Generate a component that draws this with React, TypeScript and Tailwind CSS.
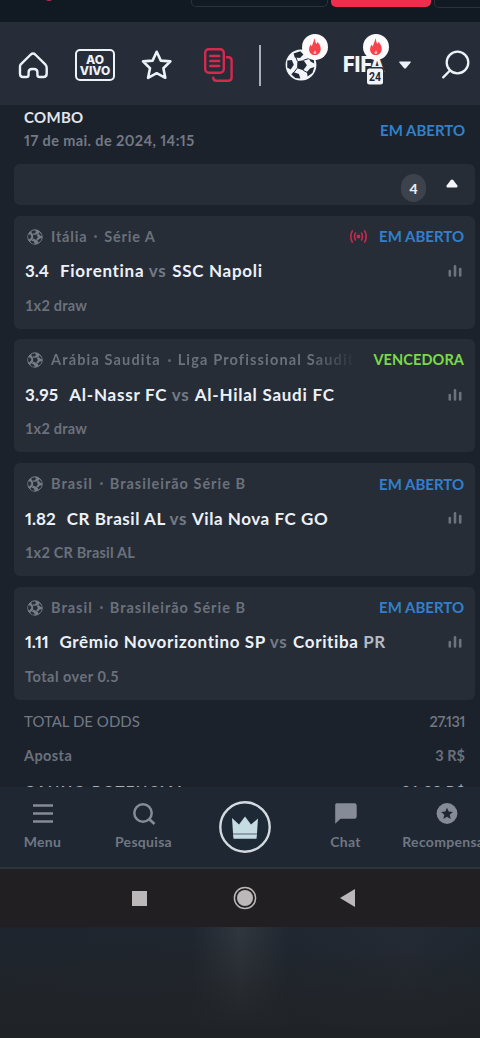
import React from 'react';

interface Bet {
  country: string;
  league: string;
  leagueClass: string;
  odd: string;
  oddClass?: string;
  home: React.ReactNode;
  away: React.ReactNode;
  matchClass: string;
  market: string;
  marketClass: string;
  won?: boolean;
  live?: boolean;
  fade?: boolean;
}

const bets: Bet[] = [
  {
    country: 'Itália',
    league: 'Série A',
    leagueClass: 'tracking-[0.8px]',
    odd: '3.4',
    home: 'Fiorentina',
    away: 'SSC Napoli',
    matchClass: 'tracking-[0.7px]',
    market: '1x2 draw',
    marketClass: 'tracking-[0.2px]',
    live: true,
  },
  {
    country: 'Arábia Saudita',
    league: 'Liga Profissional Saudita',
    leagueClass: 'tracking-[1.15px]',
    odd: '3.95',
    oddClass: 'tracking-[0.2px]',
    home: 'Al-Nassr FC',
    away: 'Al-Hilal Saudi FC',
    matchClass: 'tracking-[0.75px]',
    market: '1x2 draw',
    marketClass: 'tracking-[0.2px]',
    won: true,
    fade: true,
  },
  {
    country: 'Brasil',
    league: 'Brasileirão Série B',
    leagueClass: 'tracking-[1px]',
    odd: '1.82',
    home: 'CR Brasil AL',
    away: 'Vila Nova FC GO',
    matchClass: 'tracking-[0.55px]',
    market: '1x2 CR Brasil AL',
    marketClass: 'tracking-[0.2px]',
  },
  {
    country: 'Brasil',
    league: 'Brasileirão Série B',
    leagueClass: 'tracking-[1px]',
    odd: '1.11',
    oddClass: 'tracking-[-0.2px]',
    home: 'Grêmio Novorizontino SP',
    away: (
      <>
        Coritiba <span className="text-[#b5bac3]">PR</span>
      </>
    ),
    matchClass: 'tracking-[0.62px]',
    market: 'Total over 0.5',
    marketClass: 'tracking-[0.5px]',
  },
];

const SoccerBall: React.FC<{ className?: string; light: string; dark: string }> = ({ className, light, dark }) => (
  <svg viewBox="0 0 32 32" className={className}>
    <circle cx="16" cy="16" r="14.4" fill={light} stroke={light} strokeWidth="2" />
    <g fill={dark}>
      <path d="M12.4 12.2 18.6 11.2 21.9 16.2 18.2 21.3 12.1 19.2Z" />
      <path d="M8.6 4.4 15.3 2.3 18.4 5.4 15 9 9.8 8.4Z" />
      <path d="M24.2 6 28.8 11 29.2 14.4 25.6 12.6 23.8 9.4Z" />
      <path d="M2.3 11.6 6.8 11 8.8 15.7 5.7 20.4 2.2 18.6Z" />
      <path d="M25 19.4 29.4 18 27.4 24 22.6 27.4 21.9 23Z" />
      <path d="M8.2 23 13.9 25 15.4 29.5 10.3 28.9 6.4 25.6Z" />
    </g>
    <g stroke={dark} strokeWidth="1" fill="none">
      <path d="M12.4 12.2 10.8 8M18.6 11.2 23.8 9.6M12.1 19.2 9 23.4M18.2 21.3 22.3 23.5" />
    </g>
  </svg>
);

const FlameBadge: React.FC<{ className: string }> = ({ className }) => (
  <svg viewBox="0 0 26 26" className={`absolute size-[26px] ${className}`}>
    <circle cx="13" cy="13" r="13" fill="#fdfbfc" />
    <path
      d="M12.3 4.3C13.7 7 13 8.5 14.4 10c.7-.6.9-1.3.8-2.3 2.5 2.4 3.8 5 3.5 8-.3 3-2.6 5.4-5.8 5.4-3.4 0-5.7-2.3-5.8-5.3-.1-2.1.7-3.8 1.7-5.2.2.9.5 1.5 1.1 1.9.5-2.7 2-4.6 2.4-8.2Z"
      fill="#f8434c"
    />
    <path d="M13 16.2c1 1.1 1.4 1.7 1.2 2.6-.1.9-.6 1.3-1.4 1.3s-1.3-.5-1.3-1.3c0-.9.8-1.4 1.5-2.6Z" fill="#ffb4b2" />
  </svg>
);

const TopHeader: React.FC = () => (
  <header className="flex h-[86px] items-center text-[#edf1f8]">
    <svg viewBox="0 0 30 28" className="ml-[18px] h-7 w-[30px]" fill="none" stroke="currentColor" strokeWidth="2.4" strokeLinejoin="round">
      <path d="M2.5 13.7 12.8 3.5Q15 1.6 17.2 3.5L27.5 13.7Q28.7 15 28.7 17V22.5Q28.7 26 25.4 26H21.5Q19.4 26 19.4 23.7V21.3Q19.4 18 16 18H14Q10.6 18 10.6 21.3V23.7Q10.6 26 8.5 26H5Q2 26 2 22.5V16Q2 14.5 2.5 13.7Z" />
    </svg>
    <div className="ml-[27px] flex h-8 w-10 flex-col items-center justify-center rounded-[5px] border-[2.5px] border-current font-[Inter] text-[12px] leading-[11px] font-extrabold">
      <span>AO</span>
      <span>VIVO</span>
    </div>
    <svg viewBox="0 0 32 32" className="ml-[26px] size-8" fill="none" stroke="currentColor" strokeWidth="2.6" strokeLinejoin="round">
      <path d="M15.7 2.8 19.8 11.6 29.4 12.4 22.4 19.3 24.3 28.8 15.7 24.2 7.1 28.8 9 19.3 2 12.4 11.6 11.6Z" />
    </svg>
    <svg viewBox="0 0 30 36" className="ml-[30px] h-9 w-[30px] text-[#d5294f]" fill="none" stroke="currentColor" strokeWidth="2.4" strokeLinecap="round">
      <rect x="2.2" y="2.2" width="18.6" height="23.6" rx="3.5" />
      <path d="M7.2 9h9M7.2 14h9M7.2 19h9M24 10.2h1.3Q28.6 10.2 28.6 13.5V30.6Q28.6 33.8 25.3 33.8H13.5Q10.2 33.8 10.2 30.6" />
    </svg>
    <span className="ml-[26px] h-[41px] w-[2px] bg-[#a9aeb8]" />
    <div className="relative ml-[24px] h-8 w-11">
      <SoccerBall className="size-8" light="#f1f4f8" dark="#222936" />
      <FlameBadge className="-top-[15px] left-[17px]" />
    </div>
    <div className="relative ml-[14px] h-8 w-12">
      <svg viewBox="0 0 48 40" className="h-10 w-12" fontFamily="Roboto, sans-serif">
        <text x="0" y="23" fontSize="22" fontWeight="900" fill="#f1f4f8" textLength="41" lengthAdjust="spacingAndGlyphs">
          FIFA
        </text>
        <rect x="23" y="18" width="18" height="18.5" rx="3" fill="#262d38" />
        <rect x="24" y="19.5" width="16" height="16" rx="2.5" fill="#f1f4f8" />
        <text x="26" y="32.4" fontSize="13.5" fontWeight="700" fill="#222936" textLength="12" lengthAdjust="spacingAndGlyphs">
          24
        </text>
      </svg>
      <FlameBadge className="-top-[15px] left-[20px]" />
    </div>
    <svg viewBox="0 0 14 10" className="ml-[7px] h-[10px] w-[14px]" fill="currentColor">
      <path d="M1.6 1.6h10.8q.8.3.3 1L8.1 8q-1.1 1-2.2 0L1.3 2.6q-.5-.7.3-1Z" />
    </svg>
    <svg viewBox="0 0 30 30" className="ml-[29px] size-[30px]" fill="none" stroke="currentColor" strokeWidth="2.3" strokeLinecap="round">
      <circle cx="16.5" cy="12.5" r="10.8" />
      <path d="M9 20.5 2.2 27.4" />
    </svg>
  </header>
);

const BetCard: React.FC<{ bet: Bet }> = ({ bet }) => (
  <div className="h-[113px] rounded-[6px] bg-[#262d37] pr-[11px] pl-[11px]">
    <div className="flex h-[42px] items-center text-[14.5px] font-bold text-[#6b717c]">
      <SoccerBall className="ml-[2px] size-4 shrink-0" light="#777d87" dark="#262d37" />
      <div
        className={`ml-2 flex min-w-0 flex-1 items-center overflow-hidden whitespace-nowrap ${bet.leagueClass} ${
          bet.fade ? '[mask-image:linear-gradient(to_right,#000_84%,transparent_99%)]' : ''
        }`}
      >
        <span>{bet.country}</span>
        <span className="mx-[7px] size-[3px] shrink-0 rounded-full bg-[#5d6470]" />
        <span>{bet.league}</span>
      </div>
      {bet.live && (
        <svg viewBox="0 0 20 16" className="mr-[11px] h-[15px] w-[19px] text-[#c8294e]" fill="none" stroke="currentColor" strokeWidth="1.7" strokeLinecap="round">
          <circle cx="10" cy="8" r="1.2" fill="currentColor" />
          <path d="M6.7 4.3Q4.8 8 6.7 11.7M13.3 4.3Q15.2 8 13.3 11.7M3.4 2Q.2 8 3.4 14M16.6 2Q19.8 8 16.6 14" />
        </svg>
      )}
      {bet.won ? (
        <span className="ml-[13px] tracking-[0.1px] text-[#79dc45]">VENCEDORA</span>
      ) : (
        <span className="text-[15px] text-[#3180cb]">EM ABERTO</span>
      )}
    </div>
    <div className="flex h-[27px] items-center text-[17px] font-bold text-[#edf1f7]">
      <span className={`mr-[11px] proportional-nums ${bet.oddClass ?? ''}`}>{bet.odd}</span>
      <span className={`flex-1 whitespace-nowrap ${bet.matchClass}`}>
        {bet.home} <span className="mr-px text-[#757b86]">vs</span> {bet.away}
      </span>
      <svg viewBox="0 0 14 14" className="mr-[2px] size-[14px]" stroke="#6d737e" strokeWidth="2.6" strokeLinecap="round">
        <path d="M1.8 7V11.5M7 2.2V11.5M12.2 5V11.5" />
      </svg>
    </div>
    <div className={`flex h-[42px] items-center text-[14.5px] font-bold text-[#6b717c] ${bet.marketClass}`}>{bet.market}</div>
  </div>
);

const NavItem: React.FC<{ label: string; children: React.ReactNode }> = ({ label, children }) => (
  <div className="flex w-[101px] shrink-0 flex-col items-center pt-[15px]">
    <svg viewBox="0 0 24 24" className="size-6 text-[#858b97]">
      {children}
    </svg>
    <span className="mt-[7px] text-[14px] leading-[18px] font-bold tracking-[0.3px] text-[#707783]">{label}</span>
  </div>
);

export default function App() {
  return (
    <div className="flex h-[1038px] w-[480px] flex-col overflow-hidden bg-[#1b222c] font-[Lato,'Open_Sans',sans-serif]">
      {/* Page header scrolled almost out of view */}
      <div className="flex h-[22px] shrink-0 items-start overflow-hidden bg-[#111922]">
        <span className="-mt-[9px] ml-[44px] size-[10px] shrink-0 rounded-full bg-[#bd2951]" />
        <span className="ml-[137px] h-[7px] w-[137px] shrink-0 rounded-b-[5px] border border-t-0 border-[#2a323c]" />
        <span className="ml-[3px] h-[7px] w-[100px] shrink-0 rounded-b-[5px] bg-[#f12d4d]" />
        <span className="ml-[3px] h-[8px] w-[60px] shrink-0 rounded-bl-[5px] border border-t-0 border-[#2a323c]" />
      </div>

      <div className="h-[83px] shrink-0 bg-[#262d38]">
        <TopHeader />
      </div>

      <main className="h-[682px] shrink-0 overflow-hidden pr-[5px] pl-[14px]">
        <div className="flex h-[59px] items-center justify-between pr-[10px] pl-[10px]">
          <div className="-mt-[11px]">
            <p className="text-[15px] leading-6 font-bold tracking-[0.3px] text-[#e1e6ed]">COMBO</p>
            <p className="text-[14.5px] leading-6 font-bold tracking-[0.4px] text-[#737984] proportional-nums">17 de mai. de 2024, 14:15</p>
          </div>
          <span className="-mt-[9px] text-[15px] font-bold text-[#3180cb]">EM ABERTO</span>
        </div>

        <div className="flex h-[41px] items-center justify-end rounded-[6px] bg-[#262d37]">
          <span className="mt-[7px] flex h-[28px] w-[25px] items-center justify-center rounded-full bg-[#3c434d] text-[14px] font-black text-[#e6e9ee]">4</span>
          <svg viewBox="0 0 12 9" className="mt-[-2px] mr-[17px] ml-[20px] h-[9px] w-3" fill="#f3f5f8">
            <path d="M6 .5Q6.7.5 7.3 1.2L11.4 6.4Q12 8.4 10.5 8.4H1.5Q0 8.4.6 6.4L4.7 1.2Q5.3.5 6 .5Z" />
          </svg>
        </div>

        <div className="mt-[10.5px] flex flex-col gap-[10.7px]">
          {bets.map((bet) => (
            <BetCard key={`${bet.odd}-${bet.league}`} bet={bet} />
          ))}
        </div>

        <div className="mt-[5px] px-[10px] text-[15px] text-[#737983]">
          <div className="flex h-[34px] items-center justify-between">
            <span>TOTAL DE ODDS</span>
            <span className="text-[14.5px] font-semibold tracking-[-0.4px] proportional-nums">27.131</span>
          </div>
          <div className="flex h-[34px] items-center justify-between text-[14.5px] font-bold text-[#6b717c]">
            <span className="tracking-[0.4px]">Aposta</span>
            <span>3 R$</span>
          </div>
          <div className="flex h-[38px] items-center justify-between font-bold text-[#a9aeb7]">
            <span className="tracking-[1.3px]">GANHO POTENCIAL</span>
            <span className="tracking-[0.4px]">81.39 R$</span>
          </div>
        </div>
      </main>

      <nav className="-ml-2 flex h-[82px] w-[505px] shrink-0 border-b-2 border-[#2a3638] bg-[#1e2732]">
        <NavItem label="Menu">
          <path d="M2 3.5h20M2 11.5h20M2 19.5h20" stroke="currentColor" strokeWidth="2.4" />
        </NavItem>
        <NavItem label="Pesquisa">
          <circle cx="11" cy="11" r="8.7" fill="none" stroke="currentColor" strokeWidth="2.5" />
          <path d="m17 17 5.5 5" stroke="currentColor" strokeWidth="2.8" />
        </NavItem>
        <div className="flex w-[101px] shrink-0 justify-center pt-[14px]">
          <svg viewBox="0 0 52 52" className="size-[52px]">
            <circle cx="26" cy="26" r="24.7" fill="#1d2935" stroke="#d2dae0" strokeWidth="2.4" />
            <path d="M13 17 20 23.5 26 15.5 32 23.5 39 17.5 38 32H14Z" fill="#c5dce3" />
            <path d="M14 32H38V33.5H14Z" fill="#8e9fa9" />
            <path d="M14 33.5H38L37.5 37.7H14.5Z" fill="#c5dce3" />
          </svg>
        </div>
        <NavItem label="Chat">
          <path d="M2.5 1.2H20.5Q22.7 1.2 22.7 3.4V14.5Q22.7 16.7 20.5 16.7H6.5L1.2 21.8V2.7Q1.2 1.2 2.5 1.2Z" fill="currentColor" />
        </NavItem>
        <NavItem label="Recompensas">
          <circle cx="12" cy="11.5" r="10.4" fill="currentColor" />
          <path d="M12 5.7 13.7 9.6 17.9 10 14.7 12.8 15.7 17 12 14.8 8.3 17 9.3 12.8 6.1 10 10.3 9.6Z" fill="#1e2732" />
        </NavItem>
      </nav>

      {/* Android system buttons */}
      <div className="flex h-[58px] shrink-0 items-center bg-[#211f21] text-[#bcb8ba]">
        <span className="ml-[132px] size-[15px] bg-current" />
        <svg viewBox="0 0 24 24" className="ml-[86px] size-6">
          <circle cx="12" cy="12" r="10.6" fill="none" stroke="currentColor" strokeWidth="1.5" />
          <circle cx="12" cy="12" r="8" fill="currentColor" />
        </svg>
        <svg viewBox="0 0 16 18" className="ml-[83px] h-[18px] w-4" fill="currentColor">
          <path d="M15 0V18L0 9Z" />
        </svg>
      </div>

      <div className="flex-1 bg-[linear-gradient(to_bottom,transparent_5%,#202326_95%),linear-gradient(to_right,#1e252e_0%,#20262f_40%,#30363e_50%,#2a3038_54%,#202731_60%,#242a34_85%,#1f2730_100%)]" />
    </div>
  );
}
